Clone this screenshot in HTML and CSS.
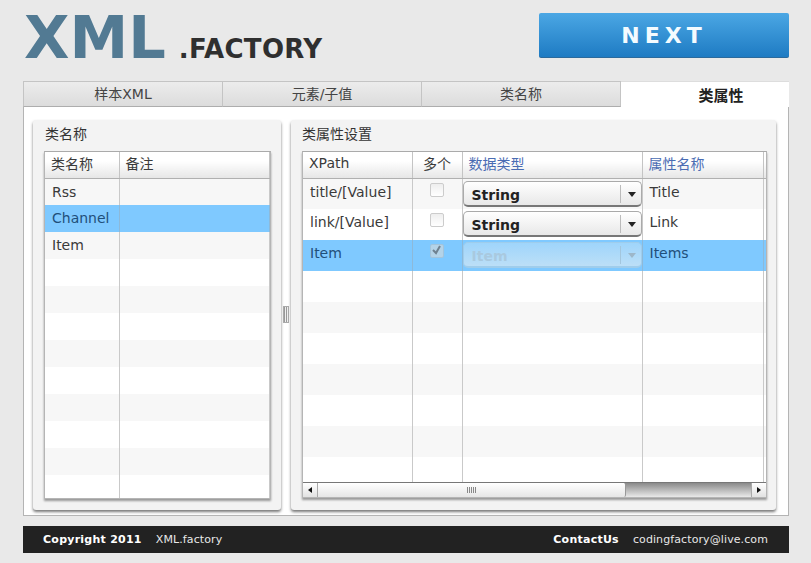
FILE: index.html
```html
<!DOCTYPE html>
<html lang="zh">
<head>
    <meta charset="UTF-8">
    <title>XML.factory</title>
    <link rel="stylesheet" href="styles.css">
</head>
<body>
    <div class="page">
        <div class="header">
            <div class="logo"><span class="logo-xml">XML</span><span class="logo-factory">.FACTORY</span></div>
            <button class="next" type="button">NEXT</button>
        </div>

        <div class="tabs">
            <div class="tab">样本XML</div>
            <div class="tab">元素/子值</div>
            <div class="tab">类名称</div>
            <div class="tab active">类属性</div>
        </div>

        <div class="tab-body">
            <div class="panel panel-left">
                <div class="panel-title">类名称</div>
                <div class="grid">
                    <div class="grid-view">
                        <table class="classes">
                            <thead><tr><th>类名称</th><th>备注</th></tr></thead>
                            <tbody>
                                <tr><td>Rss</td><td></td></tr>
                                <tr class="selected"><td>Channel</td><td></td></tr>
                                <tr><td>Item</td><td></td></tr>
                                <tr><td></td><td></td></tr>
                                <tr><td></td><td></td></tr>
                                <tr><td></td><td></td></tr>
                                <tr><td></td><td></td></tr>
                                <tr><td></td><td></td></tr>
                                <tr><td></td><td></td></tr>
                                <tr><td></td><td></td></tr>
                                <tr><td></td><td></td></tr>
                                <tr><td></td><td></td></tr>
                            </tbody>
                        </table>
                    </div>
                </div>
            </div>

            <div class="splitter"><span class="grip"></span></div>

            <div class="panel panel-right">
                <div class="panel-title">类属性设置</div>
                <div class="grid">
                    <div class="grid-view">
                        <table class="props">
                            <thead>
                                <tr><th>XPath</th><th class="center">多个</th><th class="link">数据类型</th><th class="link">属性名称</th><th></th></tr>
                            </thead>
                            <tbody>
                                <tr>
                                    <td>title/[Value]</td>
                                    <td class="center"><span class="check"></span></td>
                                    <td><span class="select">String<span class="arrow"></span></span></td>
                                    <td>Title</td><td></td>
                                </tr>
                                <tr>
                                    <td>link/[Value]</td>
                                    <td class="center"><span class="check"></span></td>
                                    <td><span class="select">String<span class="arrow"></span></span></td>
                                    <td>Link</td><td></td>
                                </tr>
                                <tr class="selected">
                                    <td>Item</td>
                                    <td class="center"><span class="check checked"><svg width="11" height="11" viewBox="0 0 11 11"><path d="M2 5l3 3 4-7" fill="none" stroke="#6f8291" stroke-width="2"/></svg></span></td>
                                    <td><span class="select disabled">Item<span class="arrow"></span></span></td>
                                    <td>Items</td>
                                    <td><span class="select disabled"></span></td>
                                </tr>
                                <tr><td></td><td></td><td></td><td></td><td></td></tr>
                                <tr><td></td><td></td><td></td><td></td><td></td></tr>
                                <tr><td></td><td></td><td></td><td></td><td></td></tr>
                                <tr><td></td><td></td><td></td><td></td><td></td></tr>
                                <tr><td></td><td></td><td></td><td></td><td></td></tr>
                                <tr><td></td><td></td><td></td><td></td><td></td></tr>
                                <tr><td></td><td></td><td></td><td></td><td></td></tr>
                            </tbody>
                        </table>
                    </div>
                    <div class="scrollbar">
                        <span class="scroll-btn"><span class="tri-left"></span></span>
                        <div class="track"><div class="thumb"><span class="thumb-grip"></span></div></div>
                        <span class="scroll-btn"><span class="tri-right"></span></span>
                    </div>
                </div>
            </div>
        </div>

        <div class="footer">
            <div><b>Copyright 2011</b><span>XML.factory</span></div>
            <div><b>ContactUs</b><span>codingfactory@live.com</span></div>
        </div>
    </div>
</body>
</html>
```

FILE: styles.css
```css
html, body {
    margin: 0;
    padding: 0;
}
body {
    background-color: #e9e9e9;
    font-family: "DejaVu Sans", "Noto Sans CJK SC", sans-serif;
    font-size: 13px;
    color: #3a3a3a;
}
.page {
    width: 766px;
    margin-left: 23px;
}

/* header */
.header {
    height: 81px;
    display: flex;
    justify-content: space-between;
    align-items: flex-start;
}
.logo {
    display: flex;
    align-items: baseline;
    margin-left: 1px;
    height: 58px;
    padding-top: 5px;
    font-weight: bold;
}
.logo-xml {
    font-size: 59px;
    line-height: 66px;
    color: #527a93;
}
.logo-factory {
    font-size: 26px;
    margin-left: 13px;
    color: #2f2f2f;
    letter-spacing: 0.3px;
}
.next {
    width: 250px;
    height: 45px;
    margin-top: 13px;
    padding: 1px 0 0 0;
    border: 0;
    border-radius: 2px;
    background: linear-gradient(#4ba7e4, #1e7bc3);
    border-bottom: 1px solid #2b6a9c;
    color: #f4fbff;
    font-family: "DejaVu Sans", sans-serif;
    font-size: 22px;
    font-weight: bold;
    letter-spacing: 5px;
}

/* tabs */
.tabs {
    display: grid;
    grid-template-columns: 200px 199px 199px 168px;
    grid-template-rows: 26px;
}
.tab {
    background: linear-gradient(#ececec, #dcdcdc);
    border-top: 1px solid #c4c4c4;
    border-right: 1px solid #c4c4c4;
    border-bottom: 1px solid #adadad;
    text-align: center;
    font-size: 14px;
    line-height: 25px;
    color: #444;
    box-sizing: border-box;
}
.tab:first-child {
    border-left: 1px solid #c4c4c4;
}
.tab.active {
    background: #fff;
    border: 0;
    border-top: 1px solid #ddd;
    padding-left: 32px;
    font-size: 15px;
    font-weight: bold;
    color: #222;
    line-height: 28px;
}
.tab-body {
    box-sizing: border-box;
    height: 409px;
    display: flex;
    padding: 13px 11px 5px 9px;
    background: #fff;
    border: 1px solid #b4b4b4;
    border-top: 0;
}

/* panels */
.panel {
    display: flex;
    flex-direction: column;
    box-sizing: border-box;
    height: 390px;
    padding: 0 9px 11px 11px;
    background: #f3f3f3;
    border-radius: 3px;
    box-shadow: 0 2px 3px #777;
}
.panel-left {
    width: 248px;
    padding-right: 10px;
}
.panel-left .panel-title {
    padding-left: 1px;
}
.panel-right {
    width: 485px;
    padding-bottom: 12px;
}
.panel-title {
    height: 31px;
    line-height: 29px;
    font-size: 14px;
    color: #333;
}
.splitter {
    width: 10px;
    display: flex;
    align-items: center;
    justify-content: center;
    padding-bottom: 2px;
}
.grip {
    width: 4px;
    height: 15px;
    border: 1px solid #aaa;
    background: repeating-linear-gradient(90deg, #999 0, #999 1px, #eee 1px, #eee 2px);
}

/* grids */
.grid {
    flex: 1;
    min-height: 0;
    display: flex;
    flex-direction: column;
    border: 1px solid #b5b5b5;
    border-top-color: #aaa;
    background: #fff;
    box-shadow: 0 2px 2px #999;
}
.grid-view {
    flex: 1;
    min-height: 0;
    overflow: hidden;
}
table {
    table-layout: fixed;
    border-collapse: collapse;
}
.classes {
    width: 225px;
}
.classes th:first-child {
    width: 74px;
}
.props {
    width: 590px;
}
.props th:nth-child(1) {
    width: 109px;
}
.props th:nth-child(2) {
    width: 50px;
}
.props th:nth-child(3) {
    width: 180px;
}
.props th:nth-child(4) {
    width: 121px;
}
th {
    height: 26px;
    padding: 0 0 3px 6px;
    background: linear-gradient(#fff 35%, #e6e6e6);
    border-right: 1px solid #c4c4c4;
    border-bottom: 1px solid #b0b0b0;
    box-sizing: border-box;
    font-size: 14px;
    font-weight: normal;
    text-align: left;
    color: #3a3a3a;
}
th.center, td.center {
    text-align: center;
    padding-left: 0;
}
th.link {
    color: #4a6cb3;
}
td {
    padding: 0 0 0 7px;
    border-right: 1px solid #c9c9c9;
    font-size: 14px;
    color: #3a3a3a;
    vertical-align: top;
    box-sizing: border-box;
}
.classes td {
    height: 27px;
    line-height: 26px;
}
.props td {
    height: 31px;
    line-height: 26px;
}
.props td:nth-child(3) {
    padding: 0;
}
tbody tr:nth-child(odd) {
    background: #f7f7f7;
}
tbody tr:nth-child(even) {
    background: #fff;
}
tbody tr.selected {
    background: #7fc9ff;
}
tr.selected td {
    color: #1f4f7a;
    border-right-color: #8db9d9;
}

/* cell editors */
.check {
    display: inline-block;
    box-sizing: border-box;
    width: 14px;
    height: 14px;
    margin-top: 4px;
    border: 1px solid #ccc;
    border-radius: 2px;
    background: linear-gradient(#eee, #fff);
    vertical-align: top;
}
.check svg {
    display: block;
    margin: 0;
}
.check.checked {
    background: #b4d3e8;
    border-color: #a2c4dc;
}
.select {
    position: relative;
    display: block;
    box-sizing: border-box;
    height: 26px;
    margin-top: 2px;
    padding-left: 8px;
    border: 1px solid #aaa;
    border-bottom: 2px solid #777;
    border-radius: 5px;
    background: linear-gradient(#fff, #e8e8e8);
    font-size: 14px;
    font-weight: bold;
    line-height: 26px;
    color: #222;
}
.select.disabled {
    border-color: #9fcdec;
    background: linear-gradient(#9fd5fb, #bcdff7);
    color: #a9c9df;
}
.arrow {
    position: absolute;
    top: 3px;
    right: 20px;
    height: 18px;
    border-left: 1px solid #bbb;
}
.arrow::after {
    content: "";
    position: absolute;
    top: 7px;
    left: 7px;
    border: 4px solid transparent;
    border-top: 5px solid #222;
    border-bottom: 0;
}
.disabled .arrow {
    border-left-color: #a3c6dd;
}
.disabled .arrow::after {
    border-top-color: #9db7c9;
}

/* scrollbar */
.scrollbar {
    flex: none;
    display: flex;
    height: 15px;
    box-sizing: border-box;
    border-top: 1px solid #777;
}
.scroll-btn {
    flex: none;
    width: 15px;
    display: flex;
    align-items: center;
    justify-content: center;
    background: linear-gradient(#fff, #e2e2e2);
    border-right: 1px solid #aaa;
    box-sizing: border-box;
}
.scroll-btn:last-child {
    border-right: 0;
    border-left: 1px solid #aaa;
}
.tri-left {
    border: 3px solid transparent;
    border-left: 0;
    border-right: 4px solid #111;
}
.tri-right {
    border: 3px solid transparent;
    border-right: 0;
    border-left: 4px solid #111;
}
.track {
    flex: 1;
    background: linear-gradient(#8a8a8a, #e9e9e9);
}
.thumb {
    width: 308px;
    height: 100%;
    display: flex;
    align-items: center;
    justify-content: center;
    box-sizing: border-box;
    background: linear-gradient(#fff, #e6e6e6);
    border-right: 1px solid #999;
    border-radius: 0 2px 2px 0;
}
.thumb-grip {
    width: 9px;
    height: 6px;
    background: repeating-linear-gradient(90deg, #888 0, #888 1px, transparent 1px, transparent 2px);
}

/* footer */
.footer {
    margin-top: 10px;
    height: 27px;
    display: flex;
    justify-content: space-between;
    align-items: center;
    padding: 0 21px 0 20px;
    background: #222;
    font-size: 11px;
    color: #e8e8e8;
}
.footer b {
    margin-right: 14px;
    color: #fff;
    letter-spacing: 0.25px;
}
.footer span {
    letter-spacing: 0.1px;
}
```
